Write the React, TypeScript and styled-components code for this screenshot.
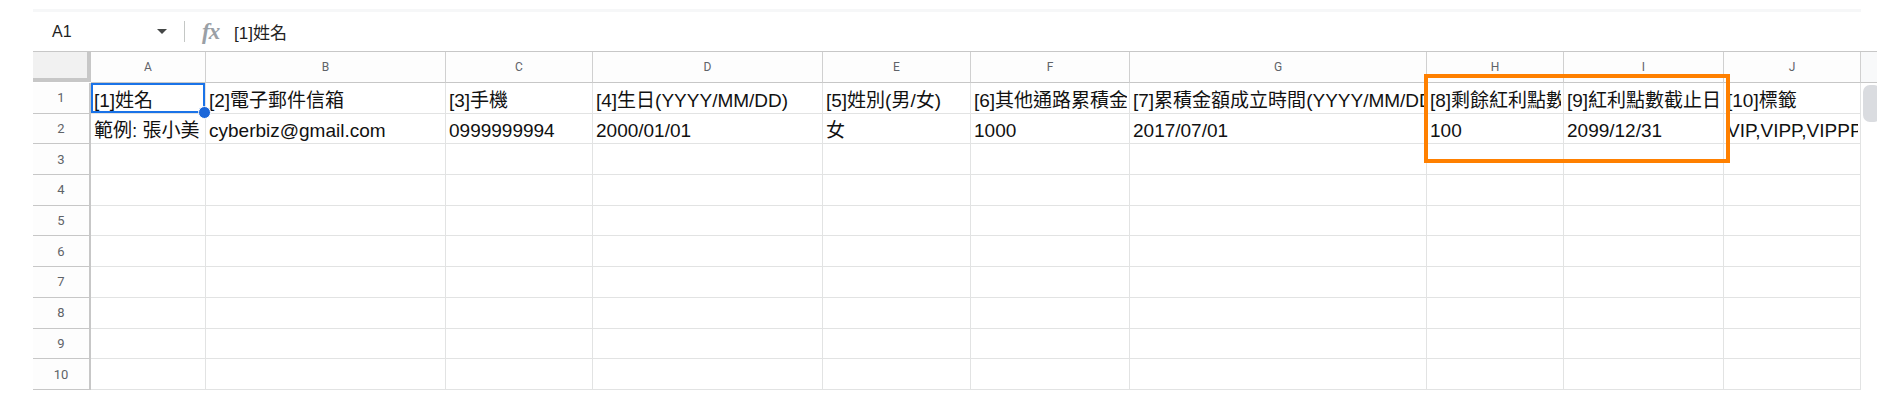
import styled, { createGlobalStyle } from "styled-components";

const GlobalStyle = createGlobalStyle`
  html, body {
    margin: 0;
    padding: 0;
    background: #ffffff;
  }
  body {
    font-family: "Liberation Sans", "Noto Sans CJK TC", sans-serif;
    color: #000;
  }
`;

const columns = [
  { key: "A", width: 115 },
  { key: "B", width: 240 },
  { key: "C", width: 147 },
  { key: "D", width: 230 },
  { key: "E", width: 148 },
  { key: "F", width: 159 },
  { key: "G", width: 297 },
  { key: "H", width: 137 },
  { key: "I", width: 160 },
  { key: "J", width: 137 }
];

const rows: string[][] = [
  [
    "[1]姓名",
    "[2]電子郵件信箱",
    "[3]手機",
    "[4]生日(YYYY/MM/DD)",
    "[5]姓別(男/女)",
    "[6]其他通路累積金額",
    "[7]累積金額成立時間(YYYY/MM/DD)",
    "[8]剩餘紅利點數",
    "[9]紅利點數截止日",
    "[10]標籤"
  ],
  [
    "範例: 張小美",
    "cyberbiz@gmail.com",
    "0999999994",
    "2000/01/01",
    "女",
    "1000",
    "2017/07/01",
    "100",
    "2099/12/31",
    "VIP,VIPP,VIPPP"
  ]
];

const ROW_COUNT = 10;

const Page = styled.div`
  width: 1877px;
  height: 411px;
  padding-left: 33px;
  box-sizing: border-box;
  overflow: hidden;
`;

const TopStrip = styled.div`
  margin-top: 9px;
  margin-right: 16px;
  height: 3px;
  background: #f6f7f8;
`;

const FormulaBar = styled.div`
  display: flex;
  align-items: center;
  height: 40px;
  box-sizing: border-box;
  border-bottom: 1px solid #c7c7c7;
`;

const NameBox = styled.div`
  width: 151px;
  box-sizing: border-box;
  display: flex;
  align-items: center;
  justify-content: space-between;
  padding: 0 17px 0 19px;
  font-size: 16px;
  color: #1f1f1f;
`;

const Caret = styled.span`
  width: 0;
  height: 0;
  border-left: 5px solid transparent;
  border-right: 5px solid transparent;
  border-top: 5px solid #444746;
`;

const Divider = styled.span`
  width: 1px;
  height: 21px;
  background: #c4c7c5;
`;

const FxIcon = styled.span`
  margin-left: 17px;
  width: 22px;
  font-family: "Liberation Serif", serif;
  font-style: italic;
  font-weight: bold;
  font-size: 23px;
  line-height: 1;
  letter-spacing: -1px;
  color: #9aa0a6;
`;

const FormulaText = styled.span`
  margin-left: 10px;
  font-size: 17px;
  color: #1f1f1f;
`;

const Sheet = styled.div`
  position: relative;
`;

const Grid = styled.div`
  display: grid;
  grid-template-columns: 58px ${columns.map(c => `${c.width}px`).join(" ")} 16px;
  grid-template-rows: 31px repeat(${ROW_COUNT}, 30.7px);
`;

const Corner = styled.div`
  box-sizing: border-box;
  background: #f1f1f1;
  border-right: 4px solid #c7c7c7;
  border-bottom: 4px solid #c7c7c7;
  margin-bottom: 1px;
`;

const ColHeader = styled.div`
  box-sizing: border-box;
  display: flex;
  align-items: center;
  justify-content: center;
  background: #fdfdfd;
  border-right: 1px solid #d0d0d0;
  border-bottom: 1px solid #c7c7c7;
  font-family: Roboto, "Liberation Sans", sans-serif;
  font-size: 12px;
  color: #5f6368;
`;

const RowHeader = styled.div`
  box-sizing: border-box;
  display: flex;
  align-items: center;
  justify-content: center;
  background: #fdfdfd;
  border-right: 2px solid #c7c7c7;
  border-bottom: 1px solid #c7c7c7;
  font-family: Roboto, "Liberation Sans", sans-serif;
  font-size: 13px;
  color: #5f6368;
`;

const Cell = styled.div<{ $selected?: boolean }>`
  position: relative;
  box-sizing: border-box;
  min-width: 0;
  display: flex;
  align-items: flex-end;
  padding: 0 2px 1px 3px;
  border-right: 1px solid #e2e3e3;
  border-bottom: 1px solid #e2e3e3;
  font-size: 19px;
  line-height: 22px;
  color: #111;
  z-index: ${p => (p.$selected ? 2 : 0)};
  box-shadow: ${p => (p.$selected ? "inset 0 0 0 2px #1a73e8" : "none")};

  &::after {
    content: "";
    display: ${p => (p.$selected ? "block" : "none")};
    position: absolute;
    right: -6px;
    bottom: -6px;
    width: 11px;
    height: 11px;
    border-radius: 50%;
    background: #1a66d9;
    border: 1px solid #ffffff;
  }
`;

const CellText = styled.span`
  flex: 1;
  min-width: 0;
  overflow: hidden;
  white-space: nowrap;
`;

const ScrollHead = styled.div`
  background: #f8f9fa;
  border-bottom: 1px solid #c7c7c7;
  box-sizing: border-box;
`;

const ScrollTrack = styled.div`
  grid-column: -2 / -1;
  grid-row: 2 / -1;
  overflow: hidden;
  padding: 2px 0 0 2px;
`;

const Thumb = styled.div`
  width: 18px;
  height: 37px;
  border-radius: 7px;
  background: #dadce0;
`;

const Highlight = styled.div`
  position: absolute;
  left: 1391px;
  top: 22px;
  width: 306px;
  height: 89px;
  box-sizing: border-box;
  border: 4px solid #ff8000;
  pointer-events: none;
`;

export default function App() {
  return (
    <Page>
      <GlobalStyle />
      <TopStrip />
      <FormulaBar>
        <NameBox>
          A1
          <Caret />
        </NameBox>
        <Divider />
        <FxIcon>fx</FxIcon>
        <FormulaText>[1]姓名</FormulaText>
      </FormulaBar>
      <Sheet>
        <Grid>
          <Corner />
          {columns.map(col => (
            <ColHeader key={col.key}>{col.key}</ColHeader>
          ))}
          <ScrollHead />
          {Array.from({ length: ROW_COUNT }, (_, r) => [
            <RowHeader key={`h${r}`}>{r + 1}</RowHeader>,
            ...columns.map((col, c) => (
              <Cell key={`${col.key}${r}`} $selected={r === 0 && c === 0}>
                <CellText>{rows[r]?.[c] ?? ""}</CellText>
              </Cell>
            ))
          ])}
          <ScrollTrack>
            <Thumb />
          </ScrollTrack>
        </Grid>
        <Highlight />
      </Sheet>
    </Page>
  );
}
